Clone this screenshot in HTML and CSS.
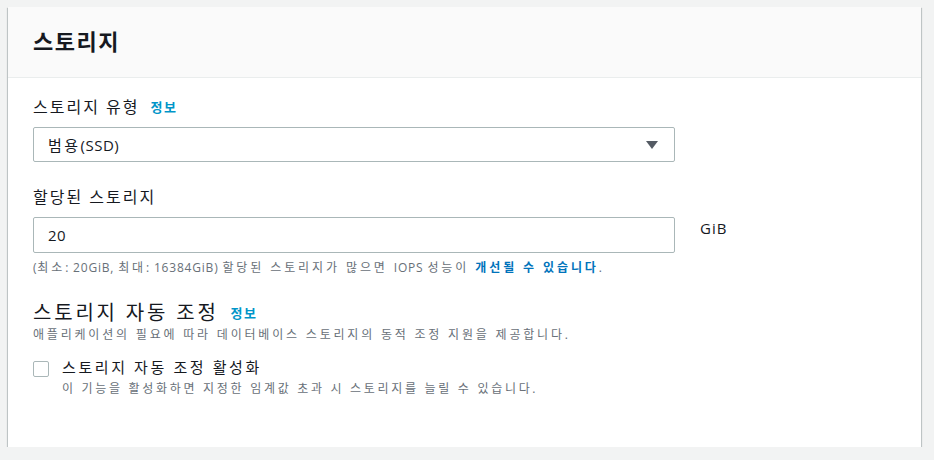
FILE: index.html
```html
<!DOCTYPE html>
<html lang="ko">
<head>
<meta charset="utf-8">
<link rel="stylesheet" href="styles.css">
</head>
<body>
<section class="card">
  <header class="card-header">
    <h2 class="card-title">스토리지</h2>
  </header>
  <div class="card-body">
    <div class="label-row"><span class="label">스토리지 유형</span><a class="info">정보</a></div>
    <div class="select">
      <span class="select-value">범용<span class="lat">(SSD)</span></span>
      <svg class="caret" width="12" height="8" viewBox="0 0 12 8"><path d="M0 0H12L6 8Z" fill="#545b64"/></svg>
    </div>

    <div class="label-row second"><span class="label">할당된 스토리지</span></div>
    <div class="input-row">
      <div class="input"><span class="lat">20</span></div>
      <span class="unit">GiB</span>
    </div>
    <p class="hint"><span class="lat">(</span>최소<span class="lat">: 20GiB, </span>최대<span class="lat">: 16384GiB) </span>할당된 스토리지가 많으면 <span class="lat">IOPS </span>성능이 <a class="strong-link">개선될 수 있습니다</a><span class="lat">.</span></p>

    <div class="sub-title-row"><h3 class="sub-title">스토리지 자동 조정</h3><a class="info">정보</a></div>
    <p class="desc">애플리케이션의 필요에 따라 데이터베이스 스토리지의 동적 조정 지원을 제공합니다.</p>

    <div class="check-row">
      <span class="checkbox"></span>
      <div class="check-text">
        <div class="check-label">스토리지 자동 조정 활성화</div>
        <p class="check-desc">이 기능을 활성화하면 지정한 임계값 초과 시 스토리지를 늘릴 수 있습니다.</p>
      </div>
    </div>
  </div>
</section>
</body>
</html>
```

FILE: styles.css
```css
* { box-sizing: border-box; }
html, body {
  margin: 0;
  padding: 0;
  background: #f2f3f3;
}
body {
  padding: 7px 13px 0 8px;
  font-family: "Open Sans", "Noto Sans CJK KR", sans-serif;
  color: #16191f;
}
.card {
  width: 913px;
  background: #fff;
  box-shadow: 0 1px 1px 0 rgba(0, 28, 36, 0.45), 1px 1px 1px 0 rgba(0, 28, 36, 0.15), -1px 1px 1px 0 rgba(0, 28, 36, 0.15);
}
.card-header {
  background: #fafafa;
  border-bottom: 1px solid #eaeded;
  padding: 19px 25px 21px 25px;
}
.card-title {
  margin: 0;
  font-size: 22px;
  line-height: 30px;
  font-weight: 700;
  letter-spacing: 1.5px;
}
.card-body {
  padding: 18px 25px 49px 25px;
}
.lat { letter-spacing: 0.5px; }
.label-row {
  display: flex;
  align-items: center;
  gap: 11px;
  height: 22px;
}
.label-row.second { margin-top: 24px; }
.label {
  font-size: 16px;
  line-height: 22px;
  letter-spacing: 2px;
  color: #16191f;
}
.info {
  font-size: 13px;
  font-weight: 700;
  letter-spacing: 1.5px;
  color: #0095c8;
  line-height: 18px;
}
.select {
  margin-top: 9px;
  width: 642px;
  height: 35px;
  border: 1px solid #aab7b8;
  border-radius: 2px;
  display: flex;
  align-items: center;
  justify-content: space-between;
  padding: 0 16px 0 14px;
  font-size: 15px;
}
.select-value { letter-spacing: 2.5px; }
.input-row {
  margin-top: 9px;
  display: flex;
  gap: 25px;
}
.input {
  width: 642px;
  height: 36px;
  border: 1px solid #aab7b8;
  border-radius: 2px;
  padding: 0 14px;
  display: flex;
  align-items: center;
  font-size: 15px;
}
.unit {
  font-size: 15px;
  line-height: 22px;
  letter-spacing: 1px;
}
.hint {
  margin: 6px 0 0;
  font-size: 12px;
  line-height: 18px;
  letter-spacing: 2.9px;
  color: #687078;
}
.hint .lat { letter-spacing: 0.8px; }
.strong-link {
  color: #0073bb;
  font-weight: 700;
}
.sub-title-row {
  margin-top: 23px;
  display: flex;
  align-items: center;
  gap: 12px;
  height: 26px;
}
.sub-title {
  margin: 0;
  font-size: 20px;
  font-weight: 400;
  line-height: 26px;
  letter-spacing: 2.8px;
}
.desc {
  margin: 0;
  font-size: 12px;
  line-height: 18px;
  letter-spacing: 2.8px;
  color: #687078;
}
.check-row {
  margin-top: 12px;
  display: flex;
  gap: 13px;
}
.checkbox {
  margin-top: 5px;
  width: 16px;
  height: 16px;
  border: 1px solid #aab7b8;
  border-radius: 2px;
  flex: none;
}
.check-label {
  font-size: 15px;
  line-height: 22px;
  letter-spacing: 2.6px;
}
.check-desc {
  margin: 2px 0 0;
  font-size: 12px;
  line-height: 18px;
  letter-spacing: 2.7px;
  color: #687078;
}
```
